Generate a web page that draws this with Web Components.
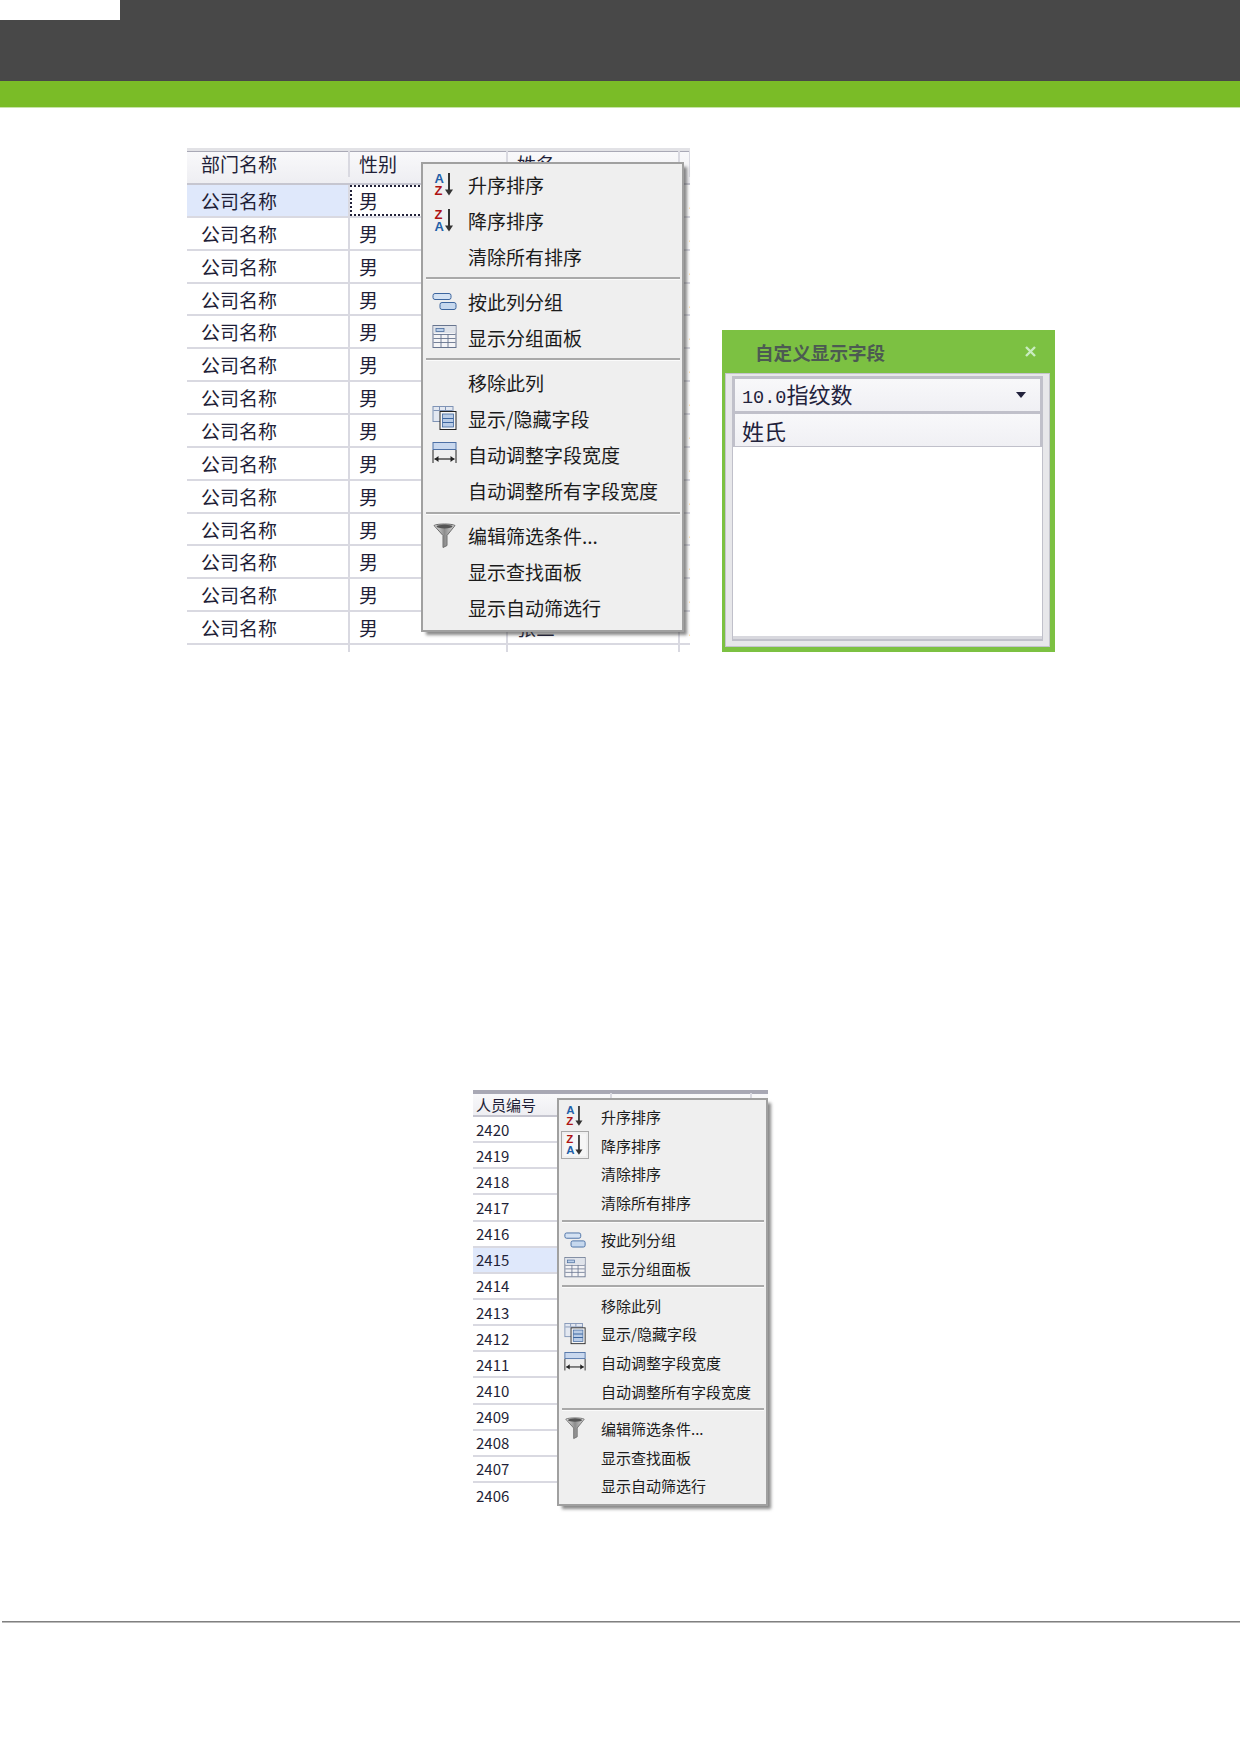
<!DOCTYPE html>
<html lang="zh">
<head>
<meta charset="utf-8">
<title>自定义显示字段</title>
<style>
  html, body { margin: 0; padding: 0; background: #fff; }
  body { font-family: "Noto Sans CJK SC", "Liberation Sans", sans-serif; }
  #big-grid {
    --col-widths: 5px 158px 158px 172px 10px;
    --row-h: 32.86px;
    --head-h: 37px;
    --grid-h: 504px;
    --cell-size: 19px;
    --cell-pad: 9px;
  }
  #small-grid {
    --col-widths: 0 138.5px 140px 16.5px;
    --row-h: 26.15px;
    --head-h: 27px;
    --grid-h: 414px;
    --cell-size: 15px;
    --cell-pad: 3px;
    --head-line: #a8a8b4;
  }
  #small-menu {
    --item-h: 28.8px;
    --text-size: 15px;
    --icon-size: 22px;
    --icon-col: 22px;
    --icon-gap: 15px;
    --pad-left: 5px;
    --sep-h: 8px;
    --menu-w: 211px;
    --menu-top: 8px;
    --menu-left: 84px;
  }
</style>
</head>
<body>
<page-banner></page-banner>

<figure-row class="first">
  <data-grid id="big-grid" head="部门名称,性别,姓名,工" first="公司名称" second="男" count="14" selected="0">
    <context-menu style="--menu-top:14px;--menu-left:234px">
      <menu-item icon="az">升序排序</menu-item>
      <menu-item icon="za">降序排序</menu-item>
      <menu-item>清除所有排序</menu-item>
      <menu-sep></menu-sep>
      <menu-item icon="group">按此列分组</menu-item>
      <menu-item icon="panel">显示分组面板</menu-item>
      <menu-sep></menu-sep>
      <menu-item>移除此列</menu-item>
      <menu-item icon="fields">显示/隐藏字段</menu-item>
      <menu-item icon="fit">自动调整字段宽度</menu-item>
      <menu-item>自动调整所有字段宽度</menu-item>
      <menu-sep></menu-sep>
      <menu-item icon="funnel">编辑筛选条件...</menu-item>
      <menu-item>显示查找面板</menu-item>
      <menu-item>显示自动筛选行</menu-item>
    </context-menu>
  </data-grid>
  <field-panel heading="自定义显示字段" band="10.0指纹数" column="姓氏"></field-panel>
</figure-row>

<figure-row class="second">
  <data-grid id="small-grid" head="人员编号,姓名,工" start="2420" second="" count="15" selected="5">
    <context-menu id="small-menu">
      <menu-item icon="az">升序排序</menu-item>
      <menu-item icon="za" pressed>降序排序</menu-item>
      <menu-item>清除排序</menu-item>
      <menu-item>清除所有排序</menu-item>
      <menu-sep></menu-sep>
      <menu-item icon="group">按此列分组</menu-item>
      <menu-item icon="panel">显示分组面板</menu-item>
      <menu-sep></menu-sep>
      <menu-item>移除此列</menu-item>
      <menu-item icon="fields">显示/隐藏字段</menu-item>
      <menu-item icon="fit">自动调整字段宽度</menu-item>
      <menu-item>自动调整所有字段宽度</menu-item>
      <menu-sep></menu-sep>
      <menu-item icon="funnel">编辑筛选条件...</menu-item>
      <menu-item>显示查找面板</menu-item>
      <menu-item>显示自动筛选行</menu-item>
    </context-menu>
  </data-grid>
</figure-row>

<page-rule></page-rule>

<script>
const CJK = `"Noto Sans CJK SC", "Liberation Sans", sans-serif`;

const ICONS = {
  az: `<text x="2" y="10.5" class="l b">A</text><text x="2" y="22.5" class="l r">Z</text>
       <path d="M16.5 1v19" stroke="#333" stroke-width="2"/><path d="M12.5 17.5h8l-4 6z" fill="#333"/>`,
  za: `<text x="2" y="10.5" class="l r">Z</text><text x="2" y="22.5" class="l b">A</text>
       <path d="M16.5 1v19" stroke="#333" stroke-width="2"/><path d="M12.5 17.5h8l-4 6z" fill="#333"/>`,
  group: `<rect x=".5" y="4.5" width="18" height="6" rx="2" fill="#d4e2f3" stroke="#3d669f"/>
          <rect x="7.5" y="13.5" width="16" height="7" rx="2" fill="#c6d8ee" stroke="#3d669f"/>`,
  panel: `<rect x=".5" y=".5" width="23" height="22" fill="#f4f4f6" stroke="#68758f"/>
          <rect x="1" y="1" width="22" height="7" fill="#dfe3ea"/>
          <rect x="3.5" y="3.5" width="8" height="3" fill="#bcd0ea" stroke="#4a6c9c" stroke-width=".8"/>
          <path d="M1 9.5h22M1 13.5h22M1 17.5h22M8.5 9v13M15.5 9v13" stroke="#68758f" stroke-width=".9"/>`,
  fields: `<rect x=".5" y=".5" width="20" height="15" fill="#e3e8f1" stroke="#7f93b5"/>
           <path d="M1 4.5h19M7 1v3M13 1v3" stroke="#7f93b5"/>
           <rect x="7.5" y="5.5" width="16" height="18" fill="#f6f6f6" stroke="#222"/>
           <rect x="10" y="8" width="11" height="13" fill="#b9cce6" stroke="#3d669f" stroke-width=".8"/>
           <path d="M10 12.5h11M10 16.5h11" stroke="#3d669f" stroke-width="1.2"/>`,
  fit: `<rect x=".5" y=".5" width="23" height="7" fill="#c9d8ee" stroke="#4d70a5"/>
        <path d="M.5 8v13M23.5 8v13" stroke="#222"/>
        <path d="M2 17h20" stroke="#222" stroke-width="1.2"/>
        <path d="M2 17l4-3v6zM22 17l-4-3v6z" fill="#222"/>`,
  funnel: `<defs><linearGradient id="fg" x1="0" x2="1" y1="0" y2="0">
             <stop offset="0" stop-color="#e8e8e8"/><stop offset=".5" stop-color="#8c8c8c"/><stop offset="1" stop-color="#dcdcdc"/>
           </linearGradient></defs>
           <path d="M1.5 2.5c3-2 18-2 21 0l-8 10v10l-4 2v-12z" fill="url(#fg)" stroke="#6e6e6e"/>
           <ellipse cx="12" cy="3.6" rx="8" ry="1.8" fill="#555"/>`
};

class PageBanner extends HTMLElement {
  constructor() {
    super();
    this.attachShadow({ mode: "open" });
    this.shadowRoot.innerHTML = `
      <style>
        :host { display: block; }
        .dark { height: 81px; background: #484848; }
        .tab { width: 120px; height: 20px; background: #fff; }
        .green { height: 26px; background: #7abc27; border-bottom: 1px solid #c8e3a8; }
      </style>
      <div class="dark"><div class="tab"></div></div>
      <div class="green"></div>`;
  }
}

class FigureRow extends HTMLElement {
  constructor() {
    super();
    this.attachShadow({ mode: "open" });
    this.shadowRoot.innerHTML = `
      <style>
        :host { display: flex; align-items: flex-end; gap: 32px; }
        :host(.first) { padding: 40px 0 0 187px; }
        :host(.second) { padding: 438px 0 0 473px; }
      </style>
      <slot></slot>`;
  }
}

class DataGrid extends HTMLElement {
  constructor() {
    super();
    this.attachShadow({ mode: "open" });
  }

  connectedCallback() {
    const head = this.getAttribute("head").split(",");
    const count = Number(this.getAttribute("count"));
    const selected = Number(this.getAttribute("selected"));
    const hasStub = this.id === "big-grid";
    const stub = `<div class="c stub"></div>`;

    let rows = `<div class="row head">${stub}${head.map(h => `<div class="c">${h}</div>`).join("")}${hasStub ? `<div class="c"></div>` : ""}</div>`;
    for (let i = 0; i <= count; i++) {
      if (i === count && !hasStub) break;
      const blank = i === count;
      const first = this.hasAttribute("start")
        ? Number(this.getAttribute("start")) - i
        : this.getAttribute("first");
      const second = this.getAttribute("second") || Number(this.getAttribute("start")) + 30 - i;
      const third = hasStub ? "张三" : "工";
      rows += `<div class="row${i === selected ? " on" : ""}">
        ${stub}
        <div class="c a">${blank ? "" : first}</div>
        <div class="c${i === 0 && hasStub ? " focus" : ""}">${blank ? "" : second}</div>
        <div class="c">${blank ? "" : third}</div>
        ${hasStub ? `<div class="c">${blank ? "" : "工号"}</div>` : ""}
      </div>`;
    }

    this.shadowRoot.innerHTML = `
      <style>
        :host {
          display: block; position: relative; flex: none;
          height: var(--grid-h); color: #1f1f38;
          font-family: ${CJK}; font-size: var(--cell-size);
        }
        .clip { height: 100%; overflow: hidden; }
        .row {
          display: grid; grid-template-columns: var(--col-widths);
          height: var(--row-h); box-sizing: border-box;
          border-bottom: 2px solid #d9d9e1;
          line-height: 1;
        }
        .head {
          height: var(--head-h);
          border-top: 3px solid var(--head-line, #e2e2e6);
          box-shadow: inset 0 1px 0 #a9a9b6;
          border-bottom-color: #c6c6d0;
          background: linear-gradient(#f9f9fb, #eeeef2);
        }
        .c {
          display: flex; align-items: center; box-sizing: border-box;
          padding-left: var(--cell-pad); overflow: hidden; white-space: nowrap;
          border-right: 2px solid #d9d9e1; min-width: 0;
        }
        .stub { padding: 0; border-right-width: 0; }
        .row .c:last-child { border-right: 0; }
        .on .stub, .on .a { background: #dfe8fb; }
        .focus { outline: 2px dotted #22223a; outline-offset: -2px; }
      </style>
      <div class="clip">${rows}</div>
      <slot></slot>`;
  }
}

class ContextMenu extends HTMLElement {
  constructor() {
    super();
    this.attachShadow({ mode: "open" });
    this.shadowRoot.innerHTML = `
      <style>
        :host {
          position: absolute; top: var(--menu-top); left: var(--menu-left);
          width: var(--menu-w, 263px); box-sizing: border-box;
          display: block; padding: 2px 0 4px;
          background: #efefef; border: 2px solid #a0a0a0;
          box-shadow: 4px 4px 3px -1px rgba(60, 60, 60, .6);
        }
      </style>
      <slot></slot>`;
  }
}

class MenuItem extends HTMLElement {
  constructor() {
    super();
    this.attachShadow({ mode: "open" });
  }

  connectedCallback() {
    const icon = ICONS[this.getAttribute("icon")] || "";
    this.shadowRoot.innerHTML = `
      <style>
        :host {
          display: flex; align-items: center; box-sizing: border-box;
          height: var(--item-h, 36px); padding-left: var(--pad-left, 9px);
          gap: var(--icon-gap, 11px); color: #1b1b1b;
          font-family: ${CJK}; font-size: var(--text-size, 19px);
        }
        .ico {
          width: var(--icon-col, 25px); height: var(--icon-col, 25px); flex: none;
          display: flex; align-items: center; justify-content: center; box-sizing: border-box;
        }
        :host([pressed]) .ico { outline: 1px solid #a9a9a9; outline-offset: 2px; background: #f6f6f6; }
        svg { width: var(--icon-size, 25px); height: var(--icon-size, 25px); display: block; overflow: visible; }
        .l { font: bold 13px "Liberation Sans", sans-serif; }
        .b { fill: #1f5fa8; }
        .r { fill: #ad1212; }
      </style>
      <span class="ico">${icon ? `<svg viewBox="0 0 24 25">${icon}</svg>` : ""}</span>
      <span><slot></slot></span>`;
  }
}

class MenuSep extends HTMLElement {
  constructor() {
    super();
    this.attachShadow({ mode: "open" });
    this.shadowRoot.innerHTML = `
      <style>
        :host { display: flex; align-items: center; height: var(--sep-h, 9.3px); padding: 0 2px 0 3px; }
        div { flex: 1; height: 2px; background: #a9a9a9; border-bottom: 1px solid #fbfbfb; }
      </style>
      <div></div>`;
  }
}

class FieldPanel extends HTMLElement {
  constructor() {
    super();
    this.attachShadow({ mode: "open" });
  }

  connectedCallback() {
    this.shadowRoot.innerHTML = `
      <style>
        :host {
          display: block; flex: none; width: 333px; height: 322px; box-sizing: border-box;
          background: #7cc142; padding: 0 5px 5px 3px;
          font-family: ${CJK};
        }
        .bar { height: 43px; display: flex; align-items: center; justify-content: space-between; padding: 0 14px 0 30px; }
        .title { font-size: 18.6px; font-weight: 700; color: #4c5a52; }
        .close { width: 11px; height: 11px; }
        .body {
          height: 274px; box-sizing: border-box; background: #e7e7ea;
          border: 1px solid #c4c4cc; padding: 2px 6px 5px;
          display: flex; flex-direction: column;
        }
        .inner { flex: 1; background: #c0c0ca; padding: 0 0 0 0; display: flex; flex-direction: column; }
        .hd {
          height: 32px; margin: 3px 3px 0; box-sizing: border-box; flex: none;
          background: linear-gradient(#f8f8fa, #f0f0f4);
          display: flex; align-items: center; justify-content: space-between;
          padding: 0 14px 0 7px; font-size: 22px; color: #22223c; line-height: 1;
        }
        .num { font-family: "Liberation Mono", monospace; font-size: 18.5px; }
        .white { flex: 1; background: #fff; margin: 1px 1px 2px; border-bottom: 3px solid #d8d8de; }
        .arrow { width: 0; height: 0; border: 5px solid transparent; border-top: 6px solid #22223c; border-bottom: 0; }
        .hd.two { margin-bottom: 0; }
      </style>
      <div class="bar">
        <span class="title">${this.getAttribute("heading")}</span>
        <svg class="close" viewBox="0 0 11 11"><path d="M1 1l9 9M10 1l-9 9" stroke="#c9ecc0" stroke-width="2.4"/></svg>
      </div>
      <div class="body">
        <div class="inner">
          <div class="hd"><span><span class="num">10.0</span>${this.getAttribute("band").replace("10.0", "")}</span><span class="arrow"></span></div>
          <div class="hd two"><span>${this.getAttribute("column")}</span></div>
          <div class="white"></div>
        </div>
      </div>`;
  }
}

class PageRule extends HTMLElement {
  constructor() {
    super();
    this.attachShadow({ mode: "open" });
    this.shadowRoot.innerHTML = `
      <style>
        :host { display: block; margin: 117px 0 0 2px; height: 2px; box-sizing: border-box; background: #808080; border-bottom: 1px solid #bbb; }
      </style>`;
  }
}

customElements.define("page-banner", PageBanner);
customElements.define("figure-row", FigureRow);
customElements.define("data-grid", DataGrid);
customElements.define("context-menu", ContextMenu);
customElements.define("menu-item", MenuItem);
customElements.define("menu-sep", MenuSep);
customElements.define("field-panel", FieldPanel);
customElements.define("page-rule", PageRule);
</script>
</body>
</html>
